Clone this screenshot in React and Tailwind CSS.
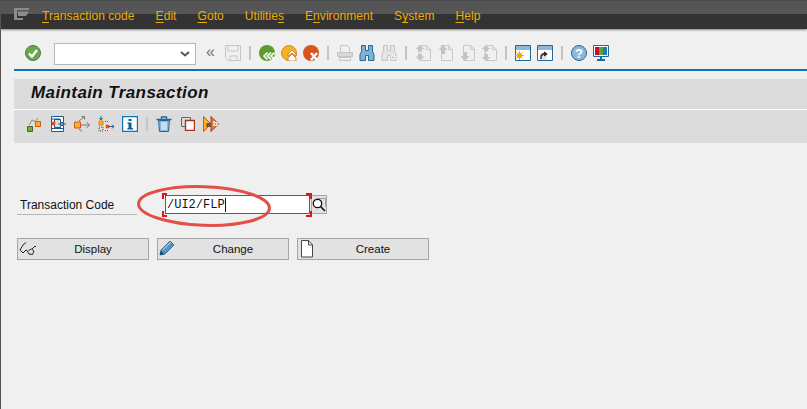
import React from "react";

const Svg = ({ children, w = 16, h = 16 }) => (
  <svg width={w} height={h} viewBox={`0 0 ${w} ${h}`} className="shrink-0 block">
    {children}
  </svg>
);

const Separator = () => <div className="w-[2px] h-[14px] bg-[#c4c4c4] shrink-0" />;
const ToolbarSeparator = () => <div className="w-[2px] mx-[2px] h-[14px] bg-[#c4c4c4] shrink-0" />;

const CheckIcon = () => (
  <Svg>
    <circle cx="8" cy="8" r="7.5" fill="#6aa84f" stroke="#4b7a3a" />
    <path d="M4 8.500l3 3 5-6.500" fill="none" stroke="#fff" strokeWidth="2.400" />
  </Svg>
);

const SaveIcon = () => (
  <Svg>
    <path d="M.5.5h15v15h-12l-3-3z" fill="#f0f0f0" stroke="#c4c4c4" />
    <path d="M3 1v5h10V1M5 15v-4h7v4" fill="none" stroke="#c4c4c4" />
  </Svg>
);

const BackIcon = () => (
  <Svg>
    <circle cx="8" cy="8" r="8" fill="#5e9a2c" />
    <path d="M8.500 7.500L5 11l3.500 3.500M12 7.500L8.500 11l3.500 3.500M15.500 7.500L12 11l3.500 3.500" fill="none" stroke="#fff" strokeWidth="1.700" />
  </Svg>
);

const ExitIcon = () => (
  <Svg>
    <circle cx="8" cy="8" r="7.500" fill="#f5b324" stroke="#e08a1e" />
    <path d="M7 9l4-4 4 4v2l-4-3-4 3zM7 13l4-4 4 4v3H7z" fill="#fff" stroke="#d8641e" strokeWidth=".8" />
  </Svg>
);

const CancelIcon = () => (
  <Svg>
    <circle cx="8" cy="8" r="8" fill="#d9541e" />
    <path d="M8 8l6 7M14 8l-6 7" stroke="#fff" strokeWidth="2.400" />
  </Svg>
);

const PrintIcon = () => (
  <Svg>
    <path d="M3.500 7V.5h7l2 2V7" fill="#f0f0f0" stroke="#c4c4c4" />
    <path d="M.5 7.500h15v4H.5z" fill="#d8d8d8" stroke="#c4c4c4" />
    <path d="M2.500 12.500h11v3h-11z" fill="#f0f0f0" stroke="#c4c4c4" />
  </Svg>
);

const BinocularsIcon = ({ color = "#1d6a9c", fill = "#7fb1d3", plus = false }) => (
  <Svg>
    <path d="M2.500.5h4v5h3v-5h4v6l1.500 3v6h-5.500v-5h-3v5H1v-6l1.500-3z" fill={fill} stroke={color} />
    {plus && <path d="M12 10v5M9.500 12.500h5" stroke="#fff" strokeWidth="2.500" />}
    {plus && <path d="M12 10.500v4M10 12.500h4" stroke={color} />}
  </Svg>
);

const PageArrowIcon = ({ variant }) => {
  const arrows = {
    first: "M5 0l4.500 4H7v2.500H3V4H.5zM5 15.500L.5 11.500H3V9h4v2.500h2.500z",
    prev: "M6 0l4.500 5H8v4H4V5H1.500z",
    next: "M6 16l-4.500-5H4V7h4v4h2.500z",
    last: "M5 .5L9.500 4H7v2.500H3V4H.5zM5 16L.5 12H3V9h4v3h2.500z",
  };
  return (
    <Svg>
      <path d="M4.500.5h7l4 4v11h-11z" fill="#f0f0f0" stroke="#c8c8c8" />
      <path d="M11.500 .5v4h4" fill="none" stroke="#c8c8c8" />
      <path d={arrows[variant]} fill="#c4c4c4" />
    </Svg>
  );
};

const NewSessionIcon = () => (
  <Svg>
    <path d="M.5.5h15v15H.5z" fill="#fff" stroke="#1d6a9c" />
    <path d="M1 1h14v4H1z" fill="#8fb8d8" />
    <circle cx="4.500" cy="10.500" r="2.600" fill="#f5a800" />
    <path d="M4.500 6v9M0 10.500h9M1.500 7.500l6 6M7.500 7.500l-6 6" stroke="#f5a800" />
  </Svg>
);

const ShortcutIcon = () => (
  <Svg>
    <path d="M.5.5h15v15H.5z" fill="#fff" stroke="#1d6a9c" />
    <path d="M1 1h14v4H1z" fill="#8fb8d8" />
    <path d="M3 8h7v7H3z" fill="#e4e4e4" />
    <path d="M4 14v-3l2-2h3M7 7l2.500 2L7 11" fill="none" stroke="#222" strokeWidth="1.400" />
  </Svg>
);

const HelpIcon = () => (
  <Svg>
    <circle cx="8" cy="8" r="7.500" fill="#8fb8d8" stroke="#1d6a9c" />
    <text x="8" y="13" textAnchor="middle" fontSize="13" fontWeight="700" fill="#fff" fontFamily="Liberation Sans, sans-serif">?</text>
  </Svg>
);

const MonitorIcon = () => (
  <Svg>
    <path d="M.5.5h15v11H.5z" fill="#fff" stroke="#1d6a9c" />
    <path d="M2 2h4v8H2z" fill="#c8102e" />
    <path d="M6 2h4v8H6z" fill="#5ca33c" />
    <path d="M10 2h4v8h-4z" fill="#1d79b8" />
    <path d="M7 12h2v2H7zM4 14h8v2H4z" fill="#1d6a9c" />
  </Svg>
);

const OtherObjectIcon = () => (
  <Svg>
    <path d="M3 9l3-5 3 1.500L12 2" fill="none" stroke="#8a8a8a" />
    <path d="M1.500 10.500h5v5h-5z" fill="#77ac3a" stroke="#3e6b26" />
    <path d="M9.500 5.500h5v5h-5z" fill="#f5b324" stroke="#d8541e" />
  </Svg>
);

const ClampIcon = () => (
  <Svg>
    <path d="M1.500 .5h12v6h-3v-3H4.500v8h6v-2h3v6h-12z" fill="#fff" stroke="#1d5a8c" />
    <path d="M2 3h8M2 12.500h12M10.500 7v2M13.500 7v2M8 8h8" fill="none" stroke="#1d5a8c" />
    <circle cx="3.500" cy="7.500" r="2" fill="#d8541e" />
  </Svg>
);

const BranchArrowIcon = () => (
  <Svg>
    <path d="M.5 6h6v6h-6z" fill="#f5b324" stroke="#d8541e" />
    <path d="M7 9h8.500M12.500 6l3 3-3 3M5 5l5-4M7.500 .5h3v3M5 13l3 2.500" fill="none" stroke="#777" />
  </Svg>
);

const HierarchyIcon = () => (
  <Svg>
    <path d="M3 0v3M1.500 2L3 4l1.500-2" fill="none" stroke="#1d5a8c" />
    <path d="M1 5h4v4H1z" fill="#f5b324" stroke="#d8841e" />
    <path d="M1 11h4v4H1zM7 5.500h3M7 14.500h4" fill="none" stroke="#555" strokeDasharray="1 1" />
    <path d="M7 8h5v5H7z" fill="#d8541e" stroke="#fff" />
    <path d="M11 10.500h5M14 8.500l2 2-2 2" fill="none" stroke="#1d5a8c" />
  </Svg>
);

const InfoIcon = () => (
  <Svg>
    <path d="M.5.5h15v15H.5z" fill="#fff" stroke="#0a76b7" strokeWidth="1.400" />
    <path d="M6.500 3h3v2h-3zM5.500 6.500h4V12h1.500v1.500H5.500V12H6.500V8H5.500z" fill="#0a5f9c" />
  </Svg>
);

const TrashIcon = () => (
  <Svg>
    <path d="M.5 3.500h15M5.500 3V1h5v2" fill="none" stroke="#1d6a9c" strokeWidth="1.300" />
    <path d="M2.500 4.500h11l-1 11h-9z" fill="#8fb8d8" stroke="#1d6a9c" />
    <path d="M6 6v8M8 6v8M10 6v8" stroke="#fff" />
  </Svg>
);

const CopyIcon = () => (
  <Svg w={14} h={14}>
    <path d="M.5.5h9v9h-9z" fill="none" stroke="#666" />
    <path d="M4.500 3.500h9v10h-9z" fill="#fff" stroke="#b5301c" strokeWidth="1.400" />
  </Svg>
);

const TranslateIcon = () => (
  <Svg>
    <path d="M.5.500L8 8 .5 15.500z" fill="#f5b324" stroke="#d8541e" />
    <path d="M8 .500L15.500 8 8 15.500z" fill="#e4784a" stroke="#b5301c" />
    <text x="3" y="11" fontSize="8" fontWeight="700" fill="#333" fontFamily="Liberation Sans, sans-serif">a</text>
    <text x="10" y="10" fontSize="8" fontWeight="700" fill="#fff" fontFamily="Liberation Sans, sans-serif">b</text>
  </Svg>
);

const SearchIcon = () => (
  <svg width="14" height="14" viewBox="0 0 14 14" className="block">
    <path d="M5 .5h8.500v8" fill="none" stroke="#a0a0a0" />
    <circle cx="5.500" cy="5.500" r="4.200" fill="#fff" stroke="#111" strokeWidth="1.300" />
    <path d="M8.500 8.500l4.500 4.500" stroke="#111" strokeWidth="1.600" />
  </svg>
);

const GlassesIcon = () => (
  <Svg w={18}>
    <path d="M4 5l-3 5 3 3 3-3 1 .5 2 3.500 3.500.5L15 11l-2.500-2-3 1.500M4 5l3-2.500M13 9l3-3 1 1" fill="none" stroke="#222" />
  </Svg>
);

const PencilIcon = () => (
  <Svg>
    <path d="M1 15l1-5L11 1l4 4-9 9z" fill="#5b93bd" stroke="#35709c" />
    <path d="M1 15l1-4 3 3z" fill="#123f5f" />
    <path d="M3.500 10L12 2" stroke="#c4dcec" />
  </Svg>
);

const PageIcon = () => (
  <Svg h={18}>
    <path d="M2.500 .5h7l4 4.500v12h-11z" fill="#fff" stroke="#444" />
    <path d="M9.500 .5V5h4" fill="none" stroke="#444" />
  </Svg>
);

const menus = [
  { pre: "", key: "T", post: "ransaction code" },
  { pre: "", key: "E", post: "dit" },
  { pre: "", key: "G", post: "oto" },
  { pre: "Utilitie", key: "s", post: "" },
  { pre: "E", key: "n", post: "vironment" },
  { pre: "S", key: "y", post: "stem" },
  { pre: "", key: "H", post: "elp" },
];

const MenuBar = () => (
  <div className="relative h-[29px] shrink-0 bg-[#333333] pl-[13px] flex items-center shadow-[0_1px_2px_rgba(0,0,0,0.45)]">
    <div className="absolute inset-x-0 top-0 h-[14px] bg-[#555555] border-t border-[#4a4a4a]" />
    <div className="relative mr-[13px] -mt-[1px] w-[15px] h-[12px]">
      <svg width="15" height="12" viewBox="0 0 15 12" className="block">
        <path d="M0 0h15v2H3v8h6v2H0zM4 3.500h11L12 8H4z" fill="#8c8c8c" />
      </svg>
    </div>
    <div className="relative flex gap-[21px] text-[12px] leading-none tracking-[0.06px] text-[#f0ab00] mt-[3px]">
      {menus.map((m) => (
        <span key={m.key + m.post} className="whitespace-pre">
          {m.pre}
          <span className="underline underline-offset-2">{m.key}</span>
          {m.post}
        </span>
      ))}
    </div>
  </div>
);

const SystemToolbar = () => (
  <div className="h-[42px] shrink-0 ml-[13px] border-b-[2px] border-[#0a76b7] flex items-center pl-[11px] pt-[8px]">
    <CheckIcon />
    <div className="ml-[13px] mt-[2px] w-[142px] h-[22px] bg-white border border-[#b8b8b8] flex items-center justify-end pr-[5px] shrink-0">
      <svg width="10" height="6" viewBox="0 0 10 6" className="block">
        <path d="M1 1l4 3.500L9 1" fill="none" stroke="#555" strokeWidth="2" />
      </svg>
    </div>
    <span className="ml-[10px] w-[11px] text-[16px] leading-none text-[#777] -mt-[3px]">«</span>
    <div className="ml-[8px] flex items-center gap-[6px]">
      <SaveIcon />
      <ToolbarSeparator />
      <BackIcon />
      <ExitIcon />
      <CancelIcon />
      <ToolbarSeparator />
      <PrintIcon />
      <BinocularsIcon />
      <BinocularsIcon color="#c4c4c4" fill="#e4e4e4" plus />
      <ToolbarSeparator />
      <PageArrowIcon variant="first" />
      <PageArrowIcon variant="prev" />
      <PageArrowIcon variant="next" />
      <PageArrowIcon variant="last" />
      <ToolbarSeparator />
      <NewSessionIcon />
      <ShortcutIcon />
      <ToolbarSeparator />
      <HelpIcon />
      <MonitorIcon />
    </div>
  </div>
);

const TitleBar = () => (
  <div className="mt-[8px] ml-[13px] shrink-0 bg-[#dcdcdc]">
    <div className="h-[31px] pl-[17px] pb-[4px] flex items-center border-b border-white">
      <h1 className="text-[17px] font-bold italic leading-none tracking-[0.4px] text-[#111]">
        Maintain Transaction
      </h1>
    </div>
    <div className="h-[33px] pl-[12px] pb-[5px] flex items-center gap-[8px]">
      <OtherObjectIcon />
      <ClampIcon />
      <BranchArrowIcon />
      <HierarchyIcon />
      <InfoIcon />
      <Separator />
      <div className="flex items-center gap-[8px]">
        <TrashIcon />
        <div className="ml-[1px]">
          <CopyIcon />
        </div>
        <TranslateIcon />
      </div>
    </div>
  </div>
);

const ActionButton = ({ icon, label }) => (
  <button className="relative w-[132px] h-[22px] pl-[20px] pt-[1px] bg-[#e2e2e2] border border-[#a6a6a6] flex items-center justify-center text-[11.5px] text-[#111] shrink-0">
    <span className="absolute left-[1px] top-[1px]">{icon}</span>
    {label}
  </button>
);

const Corners = () => (
  <>
    <span className="absolute -left-[4px] -top-[3px] w-[5px] h-[6px] border-l-2 border-t-2 border-[#d9161c]" />
    <span className="absolute -left-[4px] -bottom-[4px] w-[5px] h-[6px] border-l-2 border-b-2 border-[#d9161c]" />
    <span className="absolute -right-[3px] -top-[3px] w-[6px] h-[6px] border-r-2 border-t-2 border-[#d9161c]" />
    <span className="absolute -right-[3px] -bottom-[4px] w-[6px] h-[6px] border-r-2 border-b-2 border-[#d9161c]" />
  </>
);

const TransactionForm = () => (
  <div className="ml-[16px] mt-[52px] relative">
    <div className="flex items-center h-[19px]">
      <label className="w-[148px] h-[20px] pl-[3px] text-[12px] leading-[21px] text-[#111] bg-[linear-gradient(90deg,#b8b8b8_0,#b8b8b8_120px,transparent_120px)] bg-[length:100%_1px] bg-bottom bg-no-repeat">
        Transaction Code
      </label>
      <div className="relative w-[145px] h-[19px] bg-white border border-[#0a76b7] flex items-center pl-[1px] font-['Liberation_Mono',monospace] text-[12px] text-[#111]">
        /UI2/FLP
        <span className="w-px h-[14px] bg-[#111]" />
        <Corners />
      </div>
      <button className="ml-[1px] w-[16px] h-[19px] bg-[#e2e2e2] border border-[#a6a6a6] flex items-center justify-center">
        <SearchIcon />
      </button>
    </div>
    <div className="mt-[24px] flex gap-[8px]">
      <ActionButton icon={<GlassesIcon />} label="Display" />
      <ActionButton icon={<PencilIcon />} label="Change" />
      <ActionButton icon={<PageIcon />} label="Create" />
    </div>
    {/* red annotation round the transaction code */}
    <svg width="140" height="46" viewBox="0 0 140 46" className="absolute left-[119px] -top-[13px] pointer-events-none">
      <ellipse cx="68" cy="24" rx="65.500" ry="19.300" fill="none" stroke="#e2504a" strokeWidth="3" transform="rotate(2 68 24)" />
    </svg>
  </div>
);

export default function App() {
  return (
    <div className="w-[807px] h-[409px] overflow-hidden bg-[#f0f0f0] border-l border-[#555] flex flex-col font-['Liberation_Sans',Arial,sans-serif]">
      <MenuBar />
      <SystemToolbar />
      <TitleBar />
      <TransactionForm />
    </div>
  );
}
